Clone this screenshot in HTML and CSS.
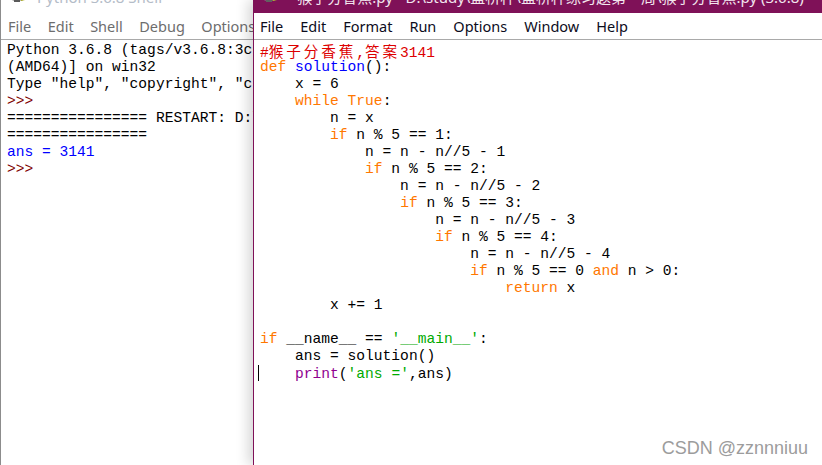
FILE: index.html
```html
<!DOCTYPE html>
<html lang="zh">
<head>
    <meta charset="UTF-8">
    <title>猴子分香蕉.py - IDLE</title>
    <link rel="stylesheet" href="styles.css">
</head>
<body>

<div class="desktop">
    <div class="window shell">
        <div class="titlebar">
            <svg class="app-icon" width="16" height="13" viewBox="0 0 16 13">
                <rect x="1" y="2" width="9" height="6" fill="#e8e8e8" stroke="#7a7a7a"/>
                <path d="M8 4 L15 1 L13 8 L9 9 Z" fill="#a8a81c"/>
                <rect x="2" y="7" width="6" height="3" fill="#5a5a5a"/>
            </svg>
            <span class="title-text">Python 3.6.8 Shell</span>
        </div>
        <div class="menubar">
            <span>File</span>
            <span>Edit</span>
            <span>Shell</span>
            <span>Debug</span>
            <span>Options</span>
            <span>Window</span>
            <span>Help</span>
        </div>
        <div class="textarea">
            <div class="line">Python 3.6.8 (tags/v3.6.8:3c6b436a57, Dec 24 2018</div>
            <div class="line">(AMD64)] on win32</div>
            <div class="line">Type "help", "copyright", "credits" or "license()"</div>
            <div class="line prompt">&gt;&gt;&gt; </div>
            <div class="line">================ RESTART: D:\study\蓝桥杯\猴子分香蕉.py</div>
            <div class="line">================</div>
            <div class="line out">ans = 3141</div>
            <div class="line prompt">&gt;&gt;&gt; </div>
        </div>
    </div>

    <div class="window editor">
        <div class="titlebar">
            <svg class="app-icon" width="16" height="13" viewBox="0 0 16 13">
                <rect x="1" y="2" width="9" height="6" fill="#f0f0f0" stroke="#8a8a8a"/>
                <path d="M8 4 L15 1 L13 8 L9 9 Z" fill="#b4b428"/>
                <rect x="2" y="7" width="6" height="3" fill="#606060"/>
            </svg>
            <span class="title-text">*猴子分香蕉.py - D:\study\蓝桥杯\蓝桥杯练习题第一周\猴子分香蕉.py (3.6.8)</span>
        </div>
        <div class="menubar">
            <span>File</span>
            <span>Edit</span>
            <span>Format</span>
            <span>Run</span>
            <span>Options</span>
            <span>Window</span>
            <span>Help</span>
        </div>
        <div class="textarea">
            <div class="line com">#<span class="cjk">猴子分香蕉</span>,<span class="cjk">答案</span>3141</div>
            <div class="line"><span class="kw">def</span> <span class="def">solution</span>():</div>
            <div class="line">    x = 6</div>
            <div class="line">    <span class="kw">while</span> <span class="kw">True</span>:</div>
            <div class="line">        n = x</div>
            <div class="line">        <span class="kw">if</span> n % 5 == 1:</div>
            <div class="line">            n = n - n//5 - 1</div>
            <div class="line">            <span class="kw">if</span> n % 5 == 2:</div>
            <div class="line">                n = n - n//5 - 2</div>
            <div class="line">                <span class="kw">if</span> n % 5 == 3:</div>
            <div class="line">                    n = n - n//5 - 3</div>
            <div class="line">                    <span class="kw">if</span> n % 5 == 4:</div>
            <div class="line">                        n = n - n//5 - 4</div>
            <div class="line">                        <span class="kw">if</span> n % 5 == 0 <span class="kw">and</span> n &gt; 0:</div>
            <div class="line">                            <span class="kw">return</span> x</div>
            <div class="line">        x += 1</div>
            <div class="line"> </div>
            <div class="line"><span class="kw">if</span> __name__ == <span class="str">'__main__'</span>:</div>
            <div class="line">    ans = solution()</div>
            <div class="line"><span class="caret"></span>    <span class="builtin">print</span>(<span class="str">'ans ='</span>,ans)</div>
        </div>
    </div>

    <div class="watermark">CSDN @zznnniuu</div>
</div>

</body>
</html>
```

FILE: styles.css
```css
html, body {
    margin: 0;
    padding: 0;
    background-color: #ffffff;
}

.desktop {
    display: flex;
    width: 822px;
    height: 465px;
    overflow: hidden;
    position: relative;
}

.window {
    display: flex;
    flex-direction: column;
    height: 465px;
    background-color: #ffffff;
    overflow: hidden;
}

.shell {
    width: 252px;
    flex: none;
    border-left: 1px solid #8c8c8c;
}

.editor {
    flex: 1;
    border-left: 1px solid #7f1158;
    position: relative;
    box-shadow: -5px 0 12px rgba(0, 0, 0, 0.16);
}

/* title bars: only the lower edge is on screen */
.titlebar {
    height: 13px;
    display: flex;
    align-items: flex-end;
    overflow: hidden;
    font-family: "Noto Sans", "Noto Sans CJK SC", sans-serif;
    font-size: 15px;
    white-space: nowrap;
}

.shell .titlebar {
    background-color: #ffffff;
    color: #b4bcc8;
    padding-left: 11px;
}

.editor .titlebar {
    background-color: #7f1158;
    color: #f2e6ee;
    padding-left: 10px;
}

.app-icon {
    flex: none;
    margin-bottom: 8px;
    margin-right: 9px;
}

.title-text {
    line-height: 20px;
    margin-bottom: 6px;
}

.menubar {
    height: 26px;
    display: flex;
    align-items: center;
    font-family: "Noto Sans", sans-serif;
    font-size: 14.5px;
    white-space: nowrap;
    border-bottom: 1px solid #a9a9a9;
}

.shell .menubar {
    color: #6d6d6d;
    padding-left: 7px;
    gap: 16.5px;
}

.editor .menubar {
    color: #0c0c1c;
    padding-left: 6px;
    gap: 17px;
}

.textarea {
    flex: 1;
    padding: 2px 0 0 6px;
    font-family: "Liberation Mono", "Noto Sans CJK SC", monospace;
    font-size: 14.6px;
    color: #000000;
}

.line {
    height: 17px;
    line-height: 17px;
    white-space: pre;
}

.cjk {
    font-family: "Noto Sans CJK SC", sans-serif;
    font-size: 14.6px;
    line-height: 17px;
    letter-spacing: 2.9px;
}

.prompt {
    color: #800000;
}

.out {
    color: #0000ff;
}

.com {
    color: #dd0000;
}

.kw {
    color: #ff7700;
}

.def {
    color: #0000ff;
}

.str {
    color: #00aa00;
}

.builtin {
    color: #900090;
}

.caret {
    display: inline-block;
    width: 0;
    height: 16px;
    border-left: 1px solid #000000;
    margin-left: -2px;
    margin-right: 1px;
    vertical-align: -3px;
}

.watermark {
    position: absolute;
    right: 14px;
    bottom: 6px;
    font-family: "Liberation Sans", Arial, sans-serif;
    font-size: 18px;
    color: #9c9c9c;
    text-shadow: 0 0 2px #ffffff;
}
```
